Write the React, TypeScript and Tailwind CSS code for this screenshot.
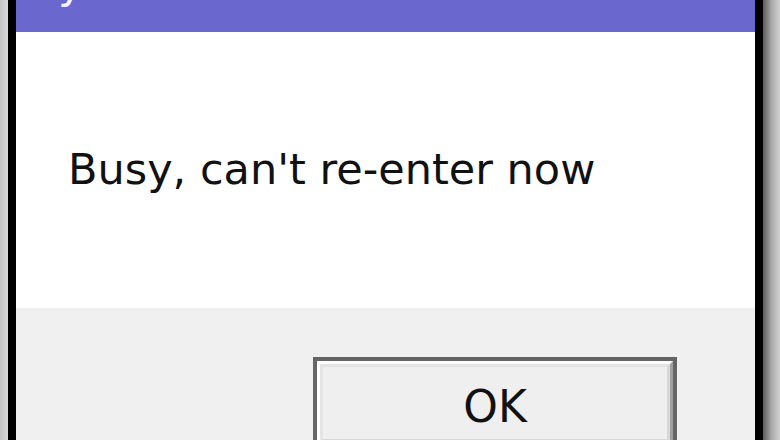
import React from "react";

export default function App() {
  const font = { fontFamily: '"DejaVu Sans", Tahoma, Verdana, sans-serif' };
  return (
    <div className="w-[780px] h-[440px] flex overflow-hidden bg-[#f0f0f0]" style={font}>
      <div className="w-[8px] h-full bg-gradient-to-r from-[#c4c4c4] to-[#dadada]" />
      <div className="w-[8px] h-full bg-black" />
      <div className="flex-1 flex flex-col h-full">
        <div className="h-[32px] bg-[#6a67ce] overflow-hidden shrink-0">
          <span className="block text-[43px] leading-none text-[#f4f4ff] mt-[-38px] ml-[42px] w-fit">y</span>
        </div>
        <div className="h-[276px] bg-white shrink-0 pt-[116px] pl-[52px]">
          <p className="text-[43px] leading-none text-[#111] whitespace-nowrap">
            Busy, can't re-enter now
          </p>
        </div>
        <div className="flex-1 bg-[#f0f0f0] pt-[49px] pl-[297px]">
          <div className="w-[364px] h-[92px] border-4 border-[#646464]">
            <div className="h-full border-[3px] border-t-white border-l-white border-r-[#a0a0a0] border-b-[#a0a0a0]">
              <div className="h-full border-[3px] border-t-[#e4e4e4] border-l-[#e4e4e4] border-r-[#d8d8d8] border-b-[#d8d8d8] bg-[#efefef] flex justify-center pt-[18px]">
                <span className="text-[44px] leading-none text-[#111]">OK</span>
              </div>
            </div>
          </div>
        </div>
      </div>
      <div className="w-[8px] h-full bg-black" />
      <div className="w-[17px] h-full bg-gradient-to-r from-[#5c5c5c] via-[#a8a8a8] to-[#d4d4d4]" />
    </div>
  );
}
